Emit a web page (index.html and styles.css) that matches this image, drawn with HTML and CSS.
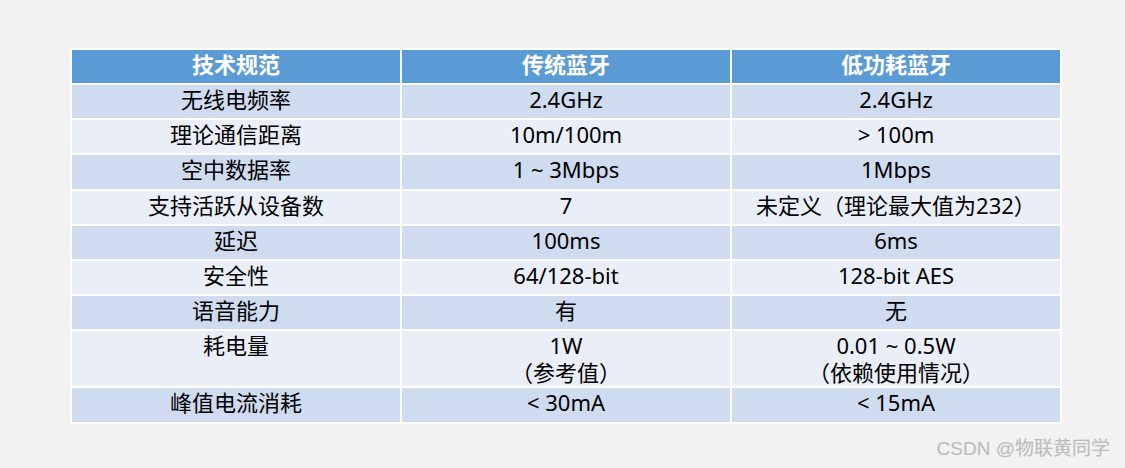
FILE: index.html
```html
<!DOCTYPE html>
<html lang="zh-CN">
<head>
<meta charset="utf-8">
<title>蓝牙对比</title>
<link rel="stylesheet" href="styles.css">
</head>
<body>
<div class="page">
  <table class="spec">
    <thead>
      <tr><th>技术规范</th><th>传统蓝牙</th><th>低功耗蓝牙</th></tr>
    </thead>
    <tbody>
      <tr class="odd"><td>无线电频率</td><td>2.4GHz</td><td>2.4GHz</td></tr>
      <tr class="even"><td>理论通信距离</td><td>10m/100m</td><td>&gt; 100m</td></tr>
      <tr class="odd"><td>空中数据率</td><td>1 ~ 3Mbps</td><td>1Mbps</td></tr>
      <tr class="even"><td>支持活跃从设备数</td><td>7</td><td>未定义（理论最大值为232）</td></tr>
      <tr class="odd"><td>延迟</td><td>100ms</td><td>6ms</td></tr>
      <tr class="even"><td>安全性</td><td>64/128-bit</td><td>128-bit AES</td></tr>
      <tr class="odd"><td>语音能力</td><td>有</td><td>无</td></tr>
      <tr class="even tall"><td>耗电量</td><td><span class="ln">1W</span><span class="ln">（参考值）</span></td><td><span class="ln">0.01 ~ 0.5W</span><span class="ln">（依赖使用情况）</span></td></tr>
      <tr class="odd"><td>峰值电流消耗</td><td>&lt; 30mA</td><td>&lt; 15mA</td></tr>
    </tbody>
  </table>
  <div class="mark">CSDN @物联黄同学</div>
</div>
</body>
</html>
```
FILE: styles.css
```css
html, body {
  margin: 0;
  padding: 0;
  background: #f2f2f2;
}
.page {
  width: 1125px;
  height: 468px;
  box-sizing: border-box;
  padding: 48px 0 0 70px;
  font-family: "Noto Sans", "Noto Sans CJK SC", sans-serif;
}
.spec {
  border-collapse: separate;
  border-spacing: 2px;
  background: #ffffff;
  width: 992px;
  table-layout: fixed;
}
.spec th, .spec td {
  width: 328px;
  padding: 0;
  text-align: center;
  vertical-align: top;
  font-size: 22px;
  line-height: 27px;
  color: #000;
}
.spec th {
  background: #5b9bd5;
  color: #fff;
  font-weight: bold;
  height: 32px;
  padding-top: 1px;
}
.spec td {
  height: 32.2px;
  padding-top: 1px;
  font-weight: normal;
}
.spec tr.tall td {
  height: 52px;
}
.ln {
  display: block;
  height: 27px;
  line-height: 27px;
}
.spec tr.odd td { background: #cfdbee; }
.spec tr.even td { background: #e9eef7; }
.mark {
  margin-top: 14px;
  width: 1040px;
  text-align: right;
  font-family: "Liberation Sans", "Noto Sans CJK SC", sans-serif;
  font-size: 19px;
  line-height: 22px;
  color: #bdbdbd;
  text-shadow: 0 0 1px #e0e0e0;
}
```
